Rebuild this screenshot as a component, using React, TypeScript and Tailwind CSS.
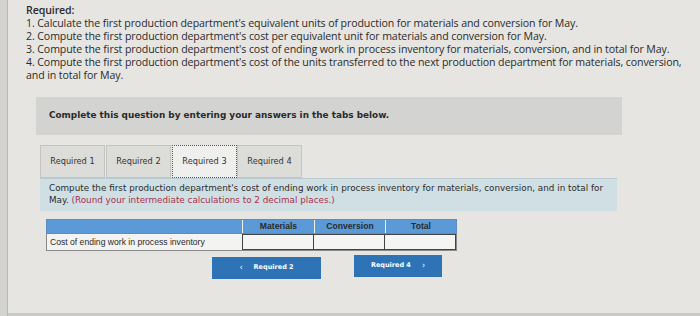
import React from 'react';

const tabs = ['Required 1', 'Required 2', 'Required 3', 'Required 4'];

const lines = [
  "1. Calculate the first production department's equivalent units of production for materials and conversion for May.",
  "2. Compute the first production department's cost per equivalent unit for materials and conversion for May.",
  "3. Compute the first production department's cost of ending work in process inventory for materials, conversion, and in total for May.",
  "4. Compute the first production department's cost of the units transferred to the next production department for materials, conversion,",
  'and in total for May.',
];

const App: React.FC = () => {
  return (
    <div className="w-[700px] h-[316px] flex bg-[#e6e5e1] overflow-hidden">
      <div className="w-[8px] h-full bg-[#d3d3d0] border-r border-[#b9b9b6]" />

      <div className="flex-1 flex flex-col">
        <div className="flex-1 flex flex-col pl-[18px] pt-[4px]">
          {/* requirements */}
          <div className="font-['Open_Sans',sans-serif] text-[10.6px] leading-[13px] text-[#2b2b2b] tracking-[-0.1px]">
            <div className="font-semibold text-[10.6px] leading-[13px]">Required:</div>
            {lines.map((l, i) => (
              <div key={i} className="whitespace-nowrap">{l}</div>
            ))}
          </div>

          {/* instruction bar */}
          <div className="ml-[10px] mt-[15px] w-[586px] h-[38px] bg-[#d3d3d1] flex items-center pl-[13px]">
            <span className="font-['DejaVu_Sans',sans-serif] font-bold text-[8.9px] text-[#2a2a2a]">
              Complete this question by entering your answers in the tabs below.
            </span>
          </div>

          {/* tabs */}
          <div className="ml-[14px] mt-[10px] flex items-end h-[33px]">
            {tabs.map((t, i) => (
              <div
                key={t}
                className={`h-full flex items-center justify-center font-['DejaVu_Sans',sans-serif] text-[8.2px] text-[#333] ${
                  i === 2
                    ? 'w-[65px] bg-[#efefed] border border-dotted border-[#555]'
                    : 'w-[65px] bg-[#dcdcd9] border border-[#c4c4c1] mr-[1px]'
                }`}
              >
                {t}
              </div>
            ))}
          </div>

          {/* prompt panel */}
          <div className="ml-[14px] w-[577px] h-[33px] bg-[#cfdfe3] border-t border-[#b9cbd0] pl-[9px] pt-[3px] font-['DejaVu_Sans',sans-serif] text-[8.8px] leading-[12px] text-[#2c2c2c]">
            <div className="whitespace-nowrap">
              Compute the first production department's cost of ending work in process inventory for materials, conversion, and in total for
            </div>
            <div className="whitespace-nowrap">
              May. <span className="text-[#a8304d]">(Round your intermediate calculations to 2 decimal places.)</span>
            </div>
          </div>

          {/* table */}
          <div className="ml-[20px] mt-[8px] w-[411px] font-['Liberation_Sans',sans-serif] text-[8.6px] text-[#2a2a2a]">
            <div className="flex h-[15px] bg-[#5b9ad6] border border-[#5a8ec2]">
              <div className="w-[195px]" />
              <div className="w-[72px] flex items-center justify-center font-bold border-l border-[#f0f0f0]">Materials</div>
              <div className="w-[71px] flex items-center justify-center font-bold border-l border-[#f0f0f0]">Conversion</div>
              <div className="flex-1 flex items-center justify-center font-bold border-l border-[#f0f0f0]">Total</div>
            </div>
            <div className="flex h-[17px] bg-[#f3f3f1] border border-t-0 border-[#8a8a88]">
              <div className="w-[195px] flex items-center pl-[3px] whitespace-nowrap">Cost of ending work in process inventory</div>
              <div className="w-[72px] border-[1.5px] border-[#444] bg-[#f5f5f3]" />
              <div className="w-[71px] border-[1.5px] border-l-0 border-[#444] bg-[#f5f5f3]" />
              <div className="flex-1 border-[1.5px] border-l-0 border-[#444] bg-[#f5f5f3]" />
            </div>
          </div>

          {/* nav buttons */}
          <div className="flex mt-[6px] ml-[186px] gap-[33px] font-['DejaVu_Sans',sans-serif] font-bold text-[6.5px] text-white">
            <div className="w-[109px] h-[22px] bg-[#2e73b6] flex items-center justify-center gap-[11px]">
              <span className="text-[8px] font-normal">&lsaquo;</span>
              <span>Required 2</span>
            </div>
            <div className="w-[88px] h-[22px] bg-[#2e73b6] flex items-center justify-center gap-[11px] -mt-[2px]">
              <span>Required 4</span>
              <span className="text-[8px] font-normal">&rsaquo;</span>
            </div>
          </div>
        </div>
        <div className="h-[3px] bg-[#c9c9c6]" />
      </div>
    </div>
  );
};

export default App;
